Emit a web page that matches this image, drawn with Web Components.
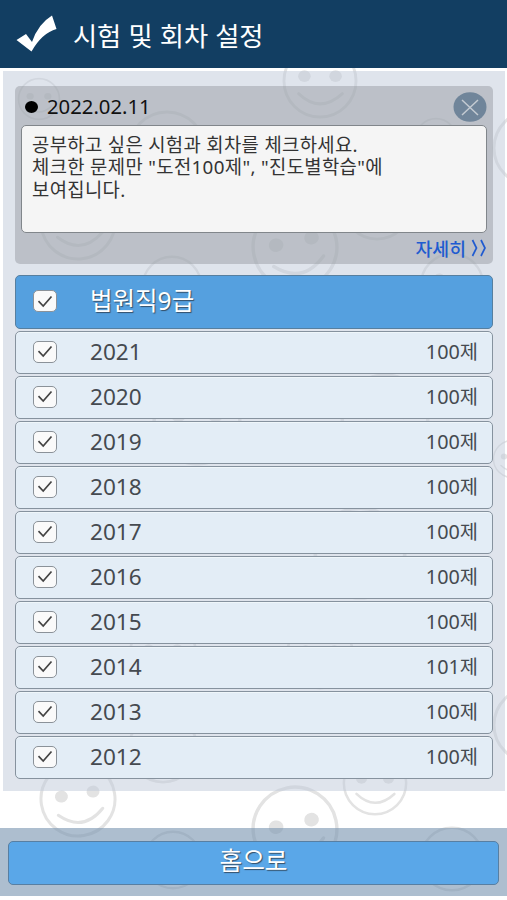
<!DOCTYPE html>
<html lang="ko"><head><meta charset="utf-8"><title>시험 및 회차 설정</title>
<style>html,body{margin:0;height:100%;background:#fff;overflow:hidden}</style></head>
<body><exam-settings></exam-settings>
<script>
const define = (name, html, init) => customElements.define(name, class extends HTMLElement {
  constructor() { super(); this.attachShadow({mode: 'open'}); }
  connectedCallback() {
    this.shadowRoot.innerHTML = html;
    if (init) init.call(this, this.shadowRoot);
  }
});

// Decorative faces: centre, radius, tilt
const faces = [[320,81,37,0],[39,99,21,0],[78,222,38,-6],[167,150,39,0],[295,247,43,-12],[172,286,30,0],[452,285,32,10],[531,148,38,0],[377,205,35,0],[436,139,21,0],[512,459,19,0],[78,799,38,-9],[295,829,43,-12],[375,783,32,0],[173,860,29,0],[452,859,32,0],[531,725,38,0],[163,748,35,0],[197,421,44,0],[163,654,34,0],[385,418,44,0],[360,553,46,0],[320,655,34,0]];
define('face-backdrop', `<style>:host{position:absolute;inset:0;z-index:-1}svg{display:block}</style>
<svg width="507" height="900" fill="none" stroke="#e3e3e3" stroke-linecap="round"></svg>`, function (r) {
  r.querySelector('svg').innerHTML = faces.map(([x,y,s,a]) => `<g transform="translate(${x} ${y}) rotate(${a}) scale(${s/38})" stroke-width="3"><circle r="37"/><ellipse cx="-16" cy="-5" rx="6.5" ry="6" fill="#e3e3e3" stroke="none"/><ellipse cx="16" cy="-5" rx="6.5" ry="6" fill="#e3e3e3" stroke="none"/><path d="M-22 13Q0 34 23 13"/></g>`).join('');
});

define('app-header', `<style>:host{display:flex;align-items:center;height:68px;box-sizing:border-box;padding:0 16px;background:#123e62;color:#fff;font-size:26.3px;line-height:36px}
svg{margin-right:16px;flex:none}span{letter-spacing:-.1px;white-space:nowrap;padding-top:1px}</style>
<svg width="41" height="38" viewBox="0 0 41 38"><path fill="#fff" d="M.5 25 10 19l6 8Q22 9 36 .5L40.5 14Q26 18 15.5 36.5Z"/></svg><span><slot></slot></span>`);

define('check-box', `<style>:host{display:flex;width:24px;height:22px;box-sizing:border-box;border:1.5px solid #8b9299;border-radius:5px;background:#fafafa;align-items:center;justify-content:center}</style>
<svg width="16" height="13" viewBox="0 0 16 13"><path d="M1.5 6.2 6.2 11 14.5 1.5" fill="none" stroke="#444" stroke-width="1.7"/></svg>`);

define('notice-card', `<style>:host{display:flex;flex-direction:column;height:178px;box-sizing:border-box;padding:0 6px;border-radius:5px;background:rgba(145,151,156,.46)}
header{display:flex;height:39px;align-items:center;padding:2px 0 0 4px;box-sizing:border-box;font:20.3px/24px "Noto Sans","Noto Sans CJK KR",sans-serif;color:#111}
.dot{width:13px;height:12px;border-radius:50%;background:#000;margin-right:9px}
.date{flex:1;padding-bottom:2px}
.body{height:108px;box-sizing:border-box;border:1.5px solid #81868b;border-radius:5px;background:#f5f5f5;padding:8px 10px;color:#333;font:18.8px/22.3px "Noto Sans","Noto Sans CJK KR",sans-serif;letter-spacing:.35px;white-space:pre}
.more{margin:4px 0 0;text-align:right;color:#205bd0;font-size:18.3px;font-weight:500;line-height:22px;display:flex;justify-content:flex-end;align-items:center;gap:5px}</style>
<header><i class="dot"></i><span class="date">2022.02.11</span><svg width="34" height="30" viewBox="0 0 34 30"><ellipse cx="17" cy="15" rx="16.5" ry="14.7" fill="#70859a"/><path d="m9 8 16 15M25 8 9 23" stroke="#c4cbd2" stroke-width="1.5"/></svg></header>
<div class="body"><slot></slot></div><div class="more"><span>자세히</span><svg width="16" height="18" viewBox="0 0 16 18" fill="none" stroke="#205bd0" stroke-width="1.7"><path d="m1.5 1 4 8-4 8M10 1l4 8-4 8"/></svg></div>`);

define('exam-group', `<style>:host{display:flex;align-items:center;height:54px;box-sizing:border-box;padding:0 18px 2px 17px;border:1.5px solid #577f9f;border-radius:5px;background:#55a0df;color:#fff;font:24.5px/30px "Noto Sans","Noto Sans CJK KR",sans-serif;text-shadow:1px 1px 1px #344e66}
check-box{margin-right:33px}span{padding-bottom:1px}</style><check-box></check-box><span><slot></slot></span>`);

define('exam-row', `<style>:host{display:flex;align-items:center;height:43px;box-sizing:border-box;padding:0 14px 2px 17px;border:1.5px solid #86929e;border-radius:5px;background:#e3edf6;color:#454a50;box-shadow:inset 0 1px #eff6fa}
check-box{margin-right:33px}.year{flex:1;font:22.6px/30px "Noto Sans",sans-serif}.count{font:19.8px/26px "Noto Sans","Noto Sans CJK KR",sans-serif}</style>
<check-box></check-box><span class="year"><slot></slot></span><span class="count"></span>`, function (r) {
  r.querySelector('.count').textContent = this.getAttribute('count') + '제';
});

define('home-bar', `<style>:host{display:flex;height:68px;box-sizing:border-box;padding:13px 8px 11px;background:rgba(119,147,175,.6)}
button{flex:1;border:1.5px solid #587fa2;border-radius:5px;background:#5aa7e8;color:#fff;font:inherit;font-size:24.7px;line-height:30px;padding:0 0 8px;text-shadow:1px 1px 1px #344e66}</style><button><slot></slot></button>`);

const rows = [2021,2020,2019,2018,2017,2016,2015,2014,2013,2012].map(y => `<exam-row count="${y === 2014 ? 101 : 100}">${y}</exam-row>`).join('');
define('exam-settings', `<style>:host{display:flex;flex-direction:column;position:relative;z-index:0;width:507px;height:900px;overflow:hidden;font-family:"Noto Sans CJK KR",sans-serif}
main{margin:3px 2px 37px 3px;height:720px;box-sizing:border-box;padding:15px 12px 0;background:rgba(192,201,217,.5)}
.list{display:flex;flex-direction:column;gap:2px;margin-top:11px}</style>
<face-backdrop></face-backdrop><app-header>시험 및 회차 설정</app-header>
<main><notice-card>공부하고 싶은 시험과 회차를 체크하세요.
체크한 문제만 "도전100제", "진도별학습"에
보여집니다.</notice-card><div class="list"><exam-group>법원직9급</exam-group>${rows}</div></main><home-bar>홈으로</home-bar>`);
</script></body></html>
